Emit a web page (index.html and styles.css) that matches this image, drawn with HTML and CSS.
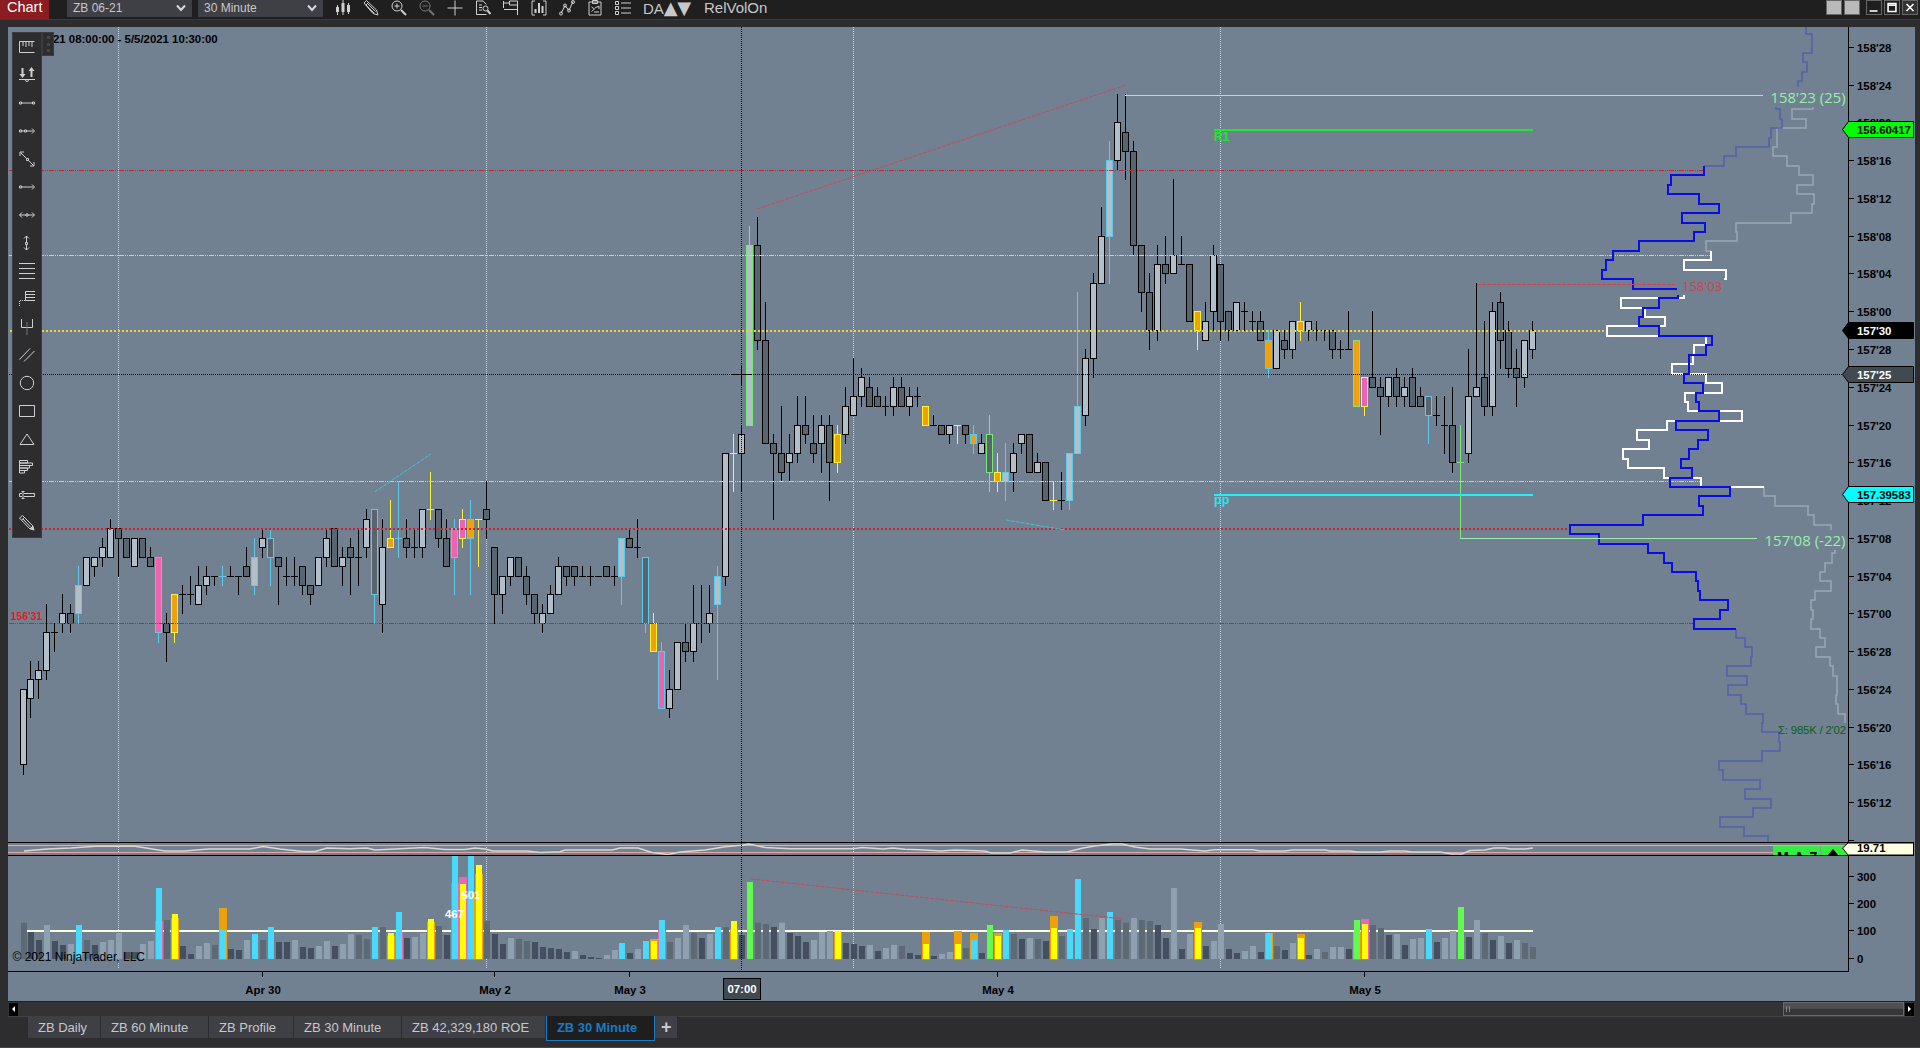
FILE: index.html
```html
<!DOCTYPE html>
<html lang="en">
<head>
  <meta charset="UTF-8">
  <meta name="viewport" content="width=device-width, initial-scale=1.0">
  <title>Chart - ZB 06-21</title>
  <link rel="stylesheet" href="styles.css">
</head>
<body>
  <header class="toolbar">
    <div class="window-tag">Chart</div>
    <div class="select">ZB 06-21 <svg width="10" height="8"><path d="M1 1.5l4 4.5 4-4.5"/></svg></div>
    <div class="select">30 Minute <svg width="10" height="8"><path d="M1 1.5l4 4.5 4-4.5"/></svg></div>

    <div class="tools">
      <svg viewBox="0 0 16 16"><path d="M2.500 5v10M8 0v15M13.500 3v11"/><path class="solid" d="M1 7h3v5H1zM6.500 3h3v9h-3zM12 5h3v7h-3z"/></svg>
      <svg viewBox="0 0 16 16"><path d="M1 3l2.500-2.500 10 9.500 1.500 5-5-1.500z"/><path d="M3 5l2.500-2.500M4.500 3.500l8 8M3 5l8 8" /></svg>
      <svg viewBox="0 0 16 16"><circle cx="6" cy="6" r="5"/><path d="M3.500 6h5M6 3.500v5"/><path class="thick" d="M10 10l5 5"/></svg>
      <svg class="dim" viewBox="0 0 16 16"><circle cx="6" cy="6" r="5"/><path d="M3.500 6h5"/><path class="thick" d="M10 10l5 5"/></svg>
      <svg viewBox="0 0 16 16"><path d="M8 .5v15M.5 8h15"/></svg>
      <svg viewBox="0 0 16 16"><path d="M11.500 4.500L8 1H1.500v13.500h10M4 5h3M4 7.500h3M4 10h3"/><circle cx="10.500" cy="8.500" r="2.500"/><path class="thick" d="M12.500 10.500l3 3.500"/></svg>
      <svg viewBox="0 0 16 16"><path d="M14.500 15V1H6.500v4h8M6 3H1M.5 1v7M1 9.500h13"/></svg>
      <svg viewBox="0 0 16 16"><path d="M4 1H1v14h3M12 1h3v14h-3"/><path class="solid" d="M3.500 9h2v4h-2zM7 3h2v10H7zM10.500 6h2v7h-2z"/></svg>
      <svg viewBox="0 0 16 16"><path d="M2 13.500l4-8 4 5 4-9"/><circle cx="2" cy="13.500" r="1.500"/><circle cx="6" cy="5.500" r="1.500"/><circle cx="10" cy="10.500" r="1.500"/><circle cx="14" cy="2" r="1.500"/></svg>
      <svg viewBox="0 0 16 16"><path d="M2 2h12v13H2zM5.500.5h5v3h-5zM4.500 7l3 2-3 2.500M8 8l4-2v3M7 12h5"/></svg>
      <svg viewBox="0 0 16 16"><path d="M.5 1.500h3v3h-3zM.5 6.500h3v3h-3zM.5 11.500h3v3h-3zM6 3h10M6 8h10M6 13h10"/></svg>
    </div>

    <span class="tool-text da">DA<span class="tri">▲▼</span></span>
    <span class="tool-text">RelVolOn</span>

    <div class="window-buttons">
      <i class="light"></i>
      <i class="light"></i>
      <svg viewBox="0 0 16 14"><path d="M3 11h9" /></svg>
      <svg viewBox="0 0 16 14"><path d="M3.500 2.500h9v9h-9zM3.500 4.500h9"/></svg>
      <svg class="close" viewBox="0 0 16 14"><path d="M4 3l8 8M12 3l-8 8"/></svg>
    </div>
  </header>

  <main class="chart-panel">
    <svg id="chart" width="1907" height="974" viewBox="8 27 1907 974"></svg>

    <div class="draw-tools">
      <svg viewBox="0 0 16 16"><path d="M.5 2.500h15M.5 2.500v11h15M4 3v4M7 3v5M10 3v4M13 3v5"/></svg>
      <svg viewBox="0 0 16 16"><path class="solid" d="M2.500 1h2v6h2l-3 4-3-4h2zM11.500 10h2V4h2l-3-4-3 4h2z"/><path d="M0 12.500h16M6.500 13a1.500 1.500 0 0 0 3 0"/></svg>
      <svg viewBox="0 0 16 16"><path d="M.5 7h2v2h-2zM13.500 7h2v2h-2zM2.500 8h11"/></svg>
      <svg viewBox="0 0 16 16"><path d="M.5 7h2v2h-2zM5.500 7h2v2h-2zM2.500 8h3M7.500 8h7M13 5.500L15.500 8 13 10.500"/></svg>
      <svg viewBox="0 0 16 16"><path d="M1.500 1.500l6 6M9.500 9.500l5 5M1 5V1h4M15 11v4h-4M7.500 7.500h2v2h-2z"/></svg>
      <svg viewBox="0 0 16 16"><path d="M.5 7h2v2h-2zM2.500 8h12M13 5.500L15.500 8 13 10.500"/></svg>
      <svg viewBox="0 0 16 16"><path d="M.5 8H7M9 8h6M3 5.500L.5 8 3 10.500M13 5.500L15.500 8 13 10.500M7 7h2v2H7z"/></svg>
      <svg viewBox="0 0 16 16"><path d="M7.500 1v6M7.500 9.500V15M5 3.500L7.500 1 10 3.500M5 12.500L7.500 15l2.500-2.500M6.500 7.500h2v2h-2z"/></svg>
      <svg viewBox="0 0 16 16"><path d="M0 .5h16M0 5.500h16M0 10.500h16M0 15.500h16"/></svg>
      <svg viewBox="0 0 16 16"><path d="M16 .5H6.500v9H16M6.500 3.500H16M6.500 6.500H16"/><path class="dots" d="M6 9.500H.5V16"/></svg>
      <svg viewBox="0 0 16 16"><path d="M2.500 0v8.500h11V0"/><path class="grey" d="M8 3v13"/></svg>
      <svg viewBox="0 0 16 16"><path d="M.5 12.500L11 1.500M5 14.500L15.500 4"/></svg>
      <svg viewBox="0 0 16 16"><circle cx="8" cy="8" r="6.700"/></svg>
      <svg viewBox="0 0 16 16"><path d="M.5 2.500h15v11H.5z"/></svg>
      <svg viewBox="0 0 16 16"><path d="M8 3l7 10.500H1z"/></svg>
      <svg viewBox="0 0 16 16"><path d="M.5 1.500h8v2.500H.5zM.5 4h13v2.500H.5zM.5 6.500h10V9H.5zM.5 9h8v2.500h-8zM.5 11.500h5V14H.5z"/></svg>
      <svg viewBox="0 0 16 16"><path d="M5 6.500h10.500v3H5M3 6.500H.5v3H3M4 4.500v7M2.500 4.500h3M2.500 11.500h3"/></svg>
      <svg viewBox="0 0 16 16"><path class="solid" d="M15.500 15.500l-1-4.500-3.500 3.500z"/><path d="M.5 3l3-2.500L14 11l-3 3zM2.500 5l3-2.500M4 4l8 8.500"/></svg>
    </div>
    <div class="draw-handle"><i></i><i></i><i></i></div>
  </main>

  <div class="scrollbar">
    <span class="arrow left"></span>
    <div class="thumb"><i></i><i></i></div>
    <span class="arrow right"></span>
  </div>

  <nav class="tabs">
    <div class="tab t1">ZB Daily</div>
    <div class="tab t2">ZB 60 Minute</div>
    <div class="tab t3">ZB Profile</div>
    <div class="tab t4">ZB 30 Minute</div>
    <div class="tab t5">ZB 42,329,180 ROE</div>
    <div class="tab active">ZB 30 Minute</div>
    <div class="tab add">+</div>
  </nav>

  <script src="chart.js"></script>
</body>
</html>
```

FILE: styles.css
```css
:root {
  --frame: #2d2d30;
  --bar: #1f1f1f;
  --control: #3f3f46;
  --chart-bg: #728191;
  --icon: #d0d0d0;
  --accent: #1b7ac2;
}

* {
  box-sizing: border-box;
}

body {
  margin: 0;
  width: 1920px;
  height: 1048px;
  overflow: hidden;
  display: flex;
  flex-direction: column;
  background: var(--frame);
  font-family: "Liberation Sans", Arial, sans-serif;
  font-size: 12px;
  color: #c8c8c8;
}

/* Top toolbar */
.toolbar {
  display: flex;
  align-items: flex-start;
  height: 20px;
  background: var(--bar);
  border-bottom: 1px solid #3a3a3c;
}

.window-tag {
  width: 49px;
  height: 19px;
  padding-left: 7px;
  margin-right: 18px;
  background: #8a1c22;
  color: #fff;
  font-size: 14.5px;
  line-height: 15px;
}

.select {
  display: flex;
  justify-content: space-between;
  align-items: center;
  width: 125px;
  height: 17px;
  padding: 0 6px 2px;
  margin-right: 6px;
  background: var(--control);
}

.select svg {
  fill: none;
  stroke: #d8d8d8;
  stroke-width: 2;
}

.tools {
  display: flex;
  gap: 12px;
  margin-left: 6px;
}

.tools svg {
  width: 16px;
  height: 16px;
}

.tools svg,
.draw-tools svg,
.window-buttons svg {
  fill: none;
  stroke: var(--icon);
  stroke-width: 1;
}

svg .solid {
  fill: var(--icon);
  stroke: none;
}

svg .thick {
  stroke-width: 2;
}

svg .dots {
  stroke-dasharray: 1 1;
}

svg .grey,
.tools svg.dim {
  stroke: #777;
}

.tool-text {
  margin-left: 12px;
  font-size: 15px;
  line-height: 15px;
}

.da {
  width: 49px;
  white-space: nowrap;
}

.tri {
  font-family: "DejaVu Sans", sans-serif;
  font-size: 18px;
  line-height: 15px;
  letter-spacing: -0.5px;
}

.window-buttons {
  display: flex;
  gap: 2px;
  margin-left: auto;
  padding-right: 2px;
}

.window-buttons svg,
.window-buttons .light {
  width: 16px;
  height: 15px;
  border: 1px solid #666;
}

.window-buttons .light {
  background: #b9b9b9;
}

.window-buttons .light + svg {
  margin-left: 4px;
}

.window-buttons svg {
  stroke: #fff;
  stroke-width: 1.8;
}

.window-buttons .close {
  background: #333;
}

/* Chart */
.chart-panel {
  position: relative;
  width: 1907px;
  height: 974px;
  margin: 7px 0 0 8px;
  background: var(--chart-bg);
}

#chart {
  display: block;
  font: bold 11.4px "Liberation Sans", Arial, sans-serif;
}

.draw-tools {
  position: absolute;
  left: 4px;
  top: 5px;
  width: 30px;
  height: 506px;
  padding: 0 6px;
  display: flex;
  flex-direction: column;
  background: var(--frame);
  border: 1px solid #3c3c40;
}

.draw-tools svg {
  width: 16px;
  height: 28px;
}

.draw-handle {
  position: absolute;
  left: 34px;
  top: 5px;
  width: 12px;
  height: 24px;
  display: flex;
  flex-direction: column;
  align-items: center;
  justify-content: space-evenly;
  background: var(--frame);
  border: 1px solid #3c3c40;
}

.draw-handle i {
  width: 3px;
  height: 3px;
  background: #46464a;
}

/* Candles */
.candle path { stroke: #000; fill: none; }
.candle rect { stroke: #000; fill: #58646e; }
.candle.up rect { fill: #b3bfc8; }
.candle.line-c path, .candle.line-c rect { stroke: #5ccbe9; }
.candle.line-y path, .candle.line-y rect { stroke: #fbf435; }
.candle.line-g path, .candle.line-g rect { stroke: #76ea72; }
.candle.fill-o rect { fill: #efa30a; }
.candle.fill-p rect { fill: #f062ae; }

/* Volume */
.vol-l { fill: #8fa0b0; }
.vol-m { fill: #5d6a76; }
.vol-d { fill: #445060; }
.vol-c { fill: #49d9fb; }
.vol-y { fill: #ffff00; }
.vol-g { fill: #63fa50; }
.vol-o { fill: #eca009; }
.vol-p { fill: #ea67b4; }

/* Lines */
.session { stroke: #cfd5da; stroke-dasharray: 1 1; }
.cross { stroke: #000; stroke-dasharray: 1 1; }
.level { stroke-dasharray: 5 1 1 1 1 1; }
.level.red { stroke: #d0222c; }
.level.yellow { stroke: #ecd82a; }
.level.poc { stroke-width: 2; stroke-dasharray: 2 2; }
.divergence { stroke-dasharray: 4 1; fill: none; }
.profile { fill: none; stroke-width: 2; }
.profile.faint { stroke-width: 1.500; }
.swing { font: 15px "Open Sans", sans-serif; }

/* Scrollbar */
.scrollbar {
  display: flex;
  align-items: center;
  width: 1907px;
  height: 16px;
  margin-left: 8px;
  background: #333334;
  border-top: 1px solid #202022;
  border-bottom: 1px solid #434346;
}

.thumb {
  display: flex;
  gap: 2px;
  width: 121px;
  height: 14px;
  margin-left: auto;
  margin-right: 1px;
  padding: 3px 2px;
  border: 1px solid #68686a;
  background: linear-gradient(#505052 45%, #363638 50%);
}

.thumb i {
  width: 1px;
  background: #858585;
}

.arrow {
  display: flex;
  align-items: center;
  justify-content: center;
  width: 9px;
  height: 13px;
  background: #000;
}

.arrow::before {
  content: "";
  border: 3px solid transparent;
}

.arrow.left { margin-left: 1px; }
.arrow.left::before { border-right-color: #fff; margin-left: -3px; }
.arrow.right { margin-right: 1px; }
.arrow.right::before { border-left-color: #fff; margin-right: -3px; }

/* Workspace tabs */
.tabs {
  display: flex;
  flex: 1;
  align-items: flex-start;
  padding-left: 28px;
  margin-top: -1px;
  font-size: 13px;
  border-bottom: 1px solid #464649;
}

.tab {
  height: 22px;
  padding-left: 10px;
  line-height: 23px;
  white-space: nowrap;
  background: var(--control);
  border-right: 1px solid #2d2d30;
}

.t1 { width: 73px; }
.t2 { width: 108px; }
.t3 { width: 85px; }
.t4 { width: 108px; }
.t5 { width: 144px; }

.tab.active {
  width: 109px;
  height: 25px;
  padding-left: 10px;
  color: var(--accent);
  background: #1e1e1e;
  border: 1px solid var(--accent);
  border-top: 0;
  font-weight: bold;
  font-size: 12.900px;
}

.tab.add {
  width: 23px;
  padding-left: 6px;
  font-size: 18px;
  font-weight: bold;
}
```

FILE: chart.js
```js
const chart = document.getElementById('chart');
const NS = 'http://www.w3.org/2000/svg';
const BG = '#728191';

// prices are in 32nds above 156'00
const TOP_TICK = 92;
const yOf = t => 47.3 + (TOP_TICK - t) * 9.4425;
const rowOf = t => Math.floor(yOf(t)) + 0.5;

// bar centre, sessions close up by a pixel
function xOf(i) {
  if (i === 0) return 23.5;
  return 22.5 + i * 8 - (i >= 75 ? 1 : 0) - (i >= 150 ? 1 : 0);
}

function add(tag, attrs, parent = chart) {
  const el = document.createElementNS(NS, tag);
  for (const key in attrs) {
    if (key === 'text') el.textContent = attrs[key];
    else el.setAttribute(key, attrs[key]);
  }
  parent.appendChild(el);
  return el;
}

function line(x1, y1, x2, y2, attrs = {}) {
  return add('line', { x1, y1, x2, y2, 'shape-rendering': 'crispEdges', ...attrs });
}

function text(x, y, value, attrs = {}) {
  return add('text', { x, y, text: value, ...attrs });
}

// open,high,low,close[,line colour + fill colour]
const candles = `
16,24,15,24 23,27,21,25 25,27,23,26 26,33,25,30 30,31,28,30 31,34,30,32 32,33,30,31 32,37,31,35,c
35,38,35,38 37,38,36,38 38,40,37,39 38,42,38,41 41,41,36,40 40,40,38,38 37,40,37,40 40,40,38,38
38,39,37,37 38,38,29,30,cp 31,32,27,30 34,34,29,30,yo 34,35,32,34 34,36,33,34 33,37,33,35 35,37,34,36
36,36,35,36 36,37,35,36,c 36,37,36,36 36,36,34,36 37,39,36,36 35,40,34,38,c 39,41,38,40 40,41,35,38,c
38,38,33,37 36,38,35,36 36,38,35,36 37,37,34,35 35,35,33,34 35,38,35,38 38,41,37,40 41,41,37,37
37,39,35,38 39,40,34,38 38,41,35,38 39,43,38,42 43,43,31,34,c 33,42,30,39 40,44,39,39,yo 40,46,38,40,c
40,42,38,39 39,41,38,39 39,43,38,43 43,47,42,43,y 43,43,39,40 40,42,37,37 41,42,34,38,cp 42,43,39,40,yp
42,44,34,40,co 42,42,37,42,y 43,46,40,42 39,39,31,34 34,36,32,36 36,38,35,38 38,38,36,36 36,37,33,34
34,34,31,32 31,33,30,32 32,35,32,34 34,38,34,37 37,37,35,36 37,37,35,36 36,37,36,36 36,37,35,36
36,36,36,36 37,37,36,36 36,37,35,36 36,40,33,40,c 40,41,39,39 39,42,38,39 38,38,30,31,c 31,32,28,28,yo
28,29,22,22,cp 22,26,21,24 24,29,24,29 29,31,27,28 28,35,27,31 31,35,29,31 31,35,30,32 33,37,25,36,c
36,49,35,49 49,51,45,49,y 49,52,45,51 52,73,52,71,g 71,74,60,61 61,65,50,50 50,51,42,49 49,54,46,47
48,51,46,49 49,55,48,52 52,55,50,51 50,53,48,49 50,53,47,52 52,53,44,48 51,52,47,48,yo 51,56,50,54
53,59,53,55 55,58,54,57 56,57,54,54 55,56,54,54 54,55,53,54 54,57,53,56 56,57,54,54 54,56,53,55
55,56,54,55 54,54,52,52,yo 52,53,52,52 52,52,51,51 51,52,50,52 52,52,50,52,y 52,52,50,51 51,52,49,50,co
49,51,49,50 51,53,45,47,g 47,49,45,46,yo 46,50,44,47,c 47,50,45,49 50,51,49,51 51,51,47,47 47,49,47,48
48,48,44,44 44,46,43,44,y 44,47,43,44 44,49,43,49,c 49,66,49,54,c 53,60,52,59 59,68,57,67 67,75,67,72
72,82,67,80,c 80,87,79,84 83,87,78,81 81,82,70,71 71,71,64,66 66,68,60,62 62,71,61,69 69,72,67,68
68,78,68,70 69,72,69,69 69,69,63,63 64,64,60,62,yo 61,65,61,63 64,71,62,70 69,69,61,63 64,64,61,62
62,65,62,65 64,65,62,64 63,64,62,63 63,64,61,61 61,62,57,58,co 58,62,58,62 61,62,59,60 60,63,59,63
63,65,61,62,yo 62,63,61,63 62,63,61,62 62,62,61,62 62,62,59,60 60,61,59,60 60,64,60,60 61,61,54,54,go
57,57,53,54,yp 57,64,56,56 56,57,51,55 55,57,54,57 57,58,54,55 55,57,54,56 57,58,54,54 55,56,54,54
55,55,50,53,c 53,55,52,53 52,55,49,52 52,56,47,48 48,52,40,48,g 49,60,48,55 55,67,55,56 57,63,53,54
54,65,53,64 65,66,58,61 62,63,57,58 58,60,54,57 57,61,56,61 60,63,59,62`.trim().split(/\s+/);

// bar height + colour, optional backing bar after the plus
const volumes = `
109m 81d 57d 102l 54d 42d 45l 102c 57m 42d 51l 57l 78l 21d 21d 45l 54l 213c+114p 117m 135y+123o
39d 15d 39l 48l 42m 87c+153o 30d 27d 57l 75c 57m 96c 51d 51d 57l 36d 33d 39l 54l 39d
45l 75l 72m 60m 96c 96m 78y+70o 141c+81p 63d 66l 78l 120y+111o 99m 72d 330c+227p 225y+246p 330c+200o 282y+255o 114m 75d
45d 63l 60m 54m 51d 36d 33d 30d 21d 24l 12d 6d 3d 12l 27l 48c 18d 30l 54c 54y+60o
117c+87p 51m 63l 102l 78m 63d 75l 96c 96m 114y+90o 72d 231g 109m 105m 96d 109l 78d 69d 51d 57l
81l 84l 84y+80o 48d 45d 39d 42l 24d 33l 42l 39m 18d 12d 45y+81o 9d 15l 21l 45y+84o 33m 57c+78o
18d 102g 69y+78o 87c 75m 60d 63l 60m 54d 93y+129o 69m 90c 240c 123m 90d 123l 141c 117m 109m 123l
117m 114m 102d 63d 213l 30d 75l 93y+111o 39d 54l 105l 30d 18d 24l 39l 21d 78c+78o 39m 27d 48l
63y+75o 12d 30l 21m 36l 36l 30d 117g+81o 105y+120p 102m 93m 72d 75l 42d 60l 63l 90c 51d 63l 84l
156g 66d 117l 78m 57d 69l 48d 57l 48m 36m`.trim().split(/\s+/);

// volume profiles, one x per tick going down
const weekProfile = { from: 94, bright: [79, 31], x: [
  1806, 1812, 1812, 1803, 1807, 1802, 1798, 1790, 1776, 1780, 1782, 1771, 1769, 1736, 1724, 1704, 1671, 1668,
  1699, 1719, 1682, 1705, 1694, 1639, 1613, 1606, 1602, 1633, 1678, 1659, 1643, 1639, 1659, 1712, 1706, 1689,
  1689, 1684, 1703, 1696, 1699, 1719, 1676, 1708, 1698, 1689, 1681, 1692, 1670, 1730, 1699, 1703, 1643, 1570,
  1599, 1648, 1664, 1672, 1696, 1698, 1700, 1728, 1720, 1694, 1736, 1745, 1752, 1751, 1727, 1747, 1728, 1741,
  1746, 1763, 1762, 1779, 1780, 1762, 1719, 1723, 1760, 1745, 1771, 1753, 1720, 1744, 1768] };

const dayProfile = { from: 86, bright: [70, 46], x: [
  1813, 1792, 1806, 1777, 1777, 1773, 1787, 1799, 1813, 1797, 1814, 1812, 1791, 1736, 1737, 1706, 1711, 1684,
  1726, 1720, 1684, 1621, 1645, 1665, 1607, 1706, 1694, 1693, 1672, 1706, 1722, 1685, 1688, 1742, 1667, 1637,
  1649, 1623, 1628, 1664, 1701, 1764, 1775, 1808, 1814, 1831, 1832, 1835, 1832, 1825, 1820, 1831, 1815, 1811,
  1813, 1811, 1820, 1825, 1816, 1830, 1833, 1837, 1837, 1836, 1838, 1845] };

function profilePath(profile, first, last) {
  const at = t => profile.x[profile.from - t];
  const edge = t => Math.round(yOf(t) + 0.6);
  let d = `M${at(first)} ${edge(first + 0.5)}`;
  for (let t = first; t >= last; t--) {
    d += `V${edge(t - 0.5)}`;
    if (at(t - 1)) d += `H${at(t - 1)}`;
  }
  return d;
}

function drawProfile(profile, color, faint) {
  const [hi, lo] = profile.bright;
  const end = profile.from - profile.x.length + 1;
  add('path', { d: profilePath(profile, profile.from, hi + 1), class: 'profile faint', stroke: faint });
  add('path', { d: profilePath(profile, lo - 1, end), class: 'profile faint', stroke: faint });
  add('path', { d: profilePath(profile, hi, lo), class: 'profile', stroke: color });
}

function drawCandles() {
  candles.forEach((row, i) => {
    const parts = row.split(',');
    const [o, h, l, c] = parts.slice(0, 4).map(rowOf);
    const style = parts[4] || '';
    let cls = 'candle' + (c < o ? ' up' : '');
    if (style[0]) cls += ' line-' + style[0];
    if (style[1]) cls += ' fill-' + style[1];
    const x = xOf(i);
    const g = add('g', { class: cls, 'shape-rendering': 'crispEdges' });
    const top = Math.min(o, c);
    const bottom = Math.max(o, c);
    add('path', { d: `M${x} ${h - 0.5}V${top}M${x} ${bottom}V${l + 0.5}` }, g);
    if (top === bottom) add('path', { d: `M${x - 3.5} ${top}H${x + 3.5}` }, g);
    else add('rect', { x: x - 3, y: top, width: 6, height: bottom - top }, g);
  });
}

function drawVolume() {
  line(24, 931, 1533, 931, { stroke: '#fffce0', 'stroke-width': 2 });
  const clip = add('clipPath', { id: 'vol-clip' });
  add('rect', { x: 8, y: 856, width: 1840, height: 116 }, clip);
  const g = add('g', { 'clip-path': 'url(#vol-clip)' });
  volumes.forEach((entry, i) => {
    const [front, back] = entry.split('+');
    const x = xOf(i) + 0.5;
    if (back) {
      const h = parseInt(back) / 3;
      add('rect', { x: x - 4, y: 959 - h, width: 8, height: h + 0.5, class: 'vol-' + back.slice(-1) }, g);
    }
    const h = parseInt(front) / 3;
    add('rect', { x: x - 3, y: 959 - h, width: 6, height: h, class: 'vol-' + front.slice(-1) }, g);
  });
  text(445, 917.5, '467', { fill: '#fff' });
  text(461.5, 898.5, '501', { fill: '#fff' });
}

function drawOscillator() {
  add('rect', { x: 8, y: 843, width: 1840, height: 2, fill: '#7f7a82' });
  add('rect', { x: 8, y: 853, width: 1840, height: 2, fill: '#7f7a82' });
  line(8, 845.5, 1848, 845.5, { stroke: '#e5a9ab' });
  line(8, 852.5, 1848, 852.5, { stroke: '#e5a9ab' });
  line(367, 843.5, 430, 843.5, { stroke: '#5795a8', 'stroke-dasharray': '4 1' });
  const points = '24,851 47,849 71,848 96,846.3 135,846.3 165,851 185,851 208,849 250,849 263,846.5 280,849 303,851.5 ' +
    '315,851.5 327,848 350,848.7 367,848 375,850 400,848.7 425,847.5 445,849.5 465,849.5 475,848 485,849 493,851 ' +
    '527,851 540,852.5 560,851.7 565,850 612,850 620,848 638,848 652,852.5 668,854.5 680,852 705,850 725,846.7 ' +
    '742,845.3 749,844 765,847.5 790,848.7 853,848.7 862,847.5 883,849 893,848 905,849.3 920,849.7 941,851 955,850 ' +
    '985,851 991,853 1010,853 1022,850 1045,852 1067,852 1083,848 1095,846 1112,844 1122,844 1135,847 1150,849 ' +
    '1180,849 1205,851 1215,849.7 1253,849.7 1260,851 1285,851 1292,850 1325,850 1330,851 1350,851 1357,852 ' +
    '1380,852 1390,851 1405,851 1412,852 1440,852 1452,854 1462,854 1470,850.5 1485,850 1494,848 1505,848 ' +
    '1510,849 1525,849 1533,848';
  add('polyline', { points, fill: 'none', stroke: '#d4d8cf', 'stroke-width': 1.5 });

  add('rect', { x: 1773, y: 846, width: 75, height: 9, fill: '#33ee40' });
  line(1820.5, 846, 1820.5, 855, { stroke: '#6fae76' });
  const clip = add('clipPath', { id: 'osc-clip' });
  add('rect', { x: 1773, y: 846, width: 75, height: 9 }, clip);
  text(1777, 862, 'M A 7', { 'clip-path': 'url(#osc-clip)', style: 'font-size:14px;letter-spacing:1px' });
  add('path', { d: 'M1828 855l5-6 5 6z' });

  line(8, 842.5, 1914, 842.5, { stroke: '#000' });
  line(8, 855.5, 1914, 855.5, { stroke: '#000' });
}

function drawLevels() {
  line(9, 170.5, 1704, 170.5, { class: 'level red' });
  line(9, 255.5, 1711, 255.5, { class: 'level yellow' });
  line(10, 331, 1607, 331, { class: 'level yellow poc' });
  line(9, 481.5, 1701, 481.5, { class: 'level yellow' });
  line(9, 529, 1570, 529, { class: 'level red poc' });
  line(9, 623.5, 1694, 623.5, { class: 'level red' });
  text(10.5, 620, "156'31", { fill: '#e01c26', style: 'font-size:10.5px' });

  line(1214, 130, 1533, 130, { stroke: '#1ee828', 'stroke-width': 2 });
  text(1214, 141, 'R1', { fill: '#1ee828', style: 'font-size:12px' });
  line(1214, 495, 1533, 495, { stroke: '#1ff2f7', 'stroke-width': 2 });
  text(1214, 503.5, 'pp', { fill: '#2be4ec', style: 'font-size:12.5px' });

  line(375, 491.7, 431, 454, { class: 'divergence', stroke: '#35c9cf', 'shape-rendering': 'auto' });
  line(1006, 520, 1065, 530, { class: 'divergence', stroke: '#35c9cf', 'shape-rendering': 'auto' });
  line(757, 209, 1126, 85, { class: 'divergence', stroke: '#c24c58', 'shape-rendering': 'auto' });
  line(751, 879, 1123, 919, { class: 'divergence', stroke: '#c24c58', 'shape-rendering': 'auto' });
}

// swing labels sit on a patch of the background
function swingLabel(x, y, width, value, fill, size) {
  add('rect', { x: x - 5, y: y - 16, width: width + 7, height: 20, fill: BG });
  text(x, y, value, { class: 'swing', fill, textLength: width, lengthAdjust: 'spacingAndGlyphs', style: `font-size:${size}px` });
}

function drawSwings() {
  line(1125, 95.5, 1763, 95.5, { stroke: '#9df0ae' });
  line(1460, 538.5, 1757, 538.5, { stroke: '#9df0ae' });
  line(1477, 284.5, 1675, 284.5, { stroke: '#c04a54', 'stroke-dasharray': '4 1' });
  swingLabel(1770.5, 103, 75, "158'23 (25)", '#93f2a6', 15);
  swingLabel(1764.5, 546, 81, "157'08 (-22)", '#93f2a6', 15);
  swingLabel(1682, 291, 40, "158'03", '#c84550', 13.5);
  text(1778, 734, "Σ: 985K / 2'02", { fill: '#0b5f1d', style: 'font-weight:normal', textLength: 68 });
}

function priceLabel(t) {
  return (156 + Math.floor(t / 32)) + "'" + String(t % 32).padStart(2, '0');
}

function flag(y, value, fill, color, stroke = '#000') {
  add('path', { d: `M1842.5 ${y}L1848.5 ${y - 8}H1913.5V${y + 8}H1848.5Z`, fill, stroke });
  text(1857, y + 4, value, { fill: color });
}

function drawAxes() {
  line(1848.5, 27, 1848.5, 971, { stroke: '#000' });
  line(8, 971.5, 1849, 971.5, { stroke: '#000' });
  for (let t = 92; t >= 12; t -= 4) {
    const y = rowOf(t);
    line(1849, y, 1854, y, { stroke: '#000' });
    text(1857, y + 4, priceLabel(t));
  }
  line(1849, 840.5, 1854, 840.5, { stroke: '#000' });
  [[300, 876.5], [200, 903.5], [100, 930.5], [0, 958.5]].forEach(([v, y]) => {
    line(1849, y, 1854, y, { stroke: '#000' });
    text(1857, y + 4, v);
  });
  [['Apr 30', 262.5], ['May 2', 494.5], ['May 3', 629.5], ['May 4', 997.5], ['May 5', 1364.5]].forEach(([label, x]) => {
    line(x, 972, x, 977, { stroke: '#000' });
    text(x + 0.5, 993.5, label, { 'text-anchor': 'middle' });
  });

  flag(129.5, '158.60417', '#00ff00', '#000');
  flag(330.5, "157'30", '#000', '#fff');
  flag(374.5, "157'25", '#414a50', '#fff');
  flag(494.5, '157.39583', '#00ffff', '#000');
  add('path', { d: 'M1842.500 848L1848 843H1913.500V855H1848Z', fill: '#ffffe2', stroke: '#000' });
  text(1857, 852, '19.71');

  add('rect', { x: 723.5, y: 978.5, width: 37, height: 21, fill: '#414a50', stroke: '#000' });
  text(742, 993, '07:00', { fill: '#fff', 'text-anchor': 'middle' });
}

function drawCrosshair() {
  line(741.5, 27, 741.5, 970, { class: 'cross' });
  line(9, 374.5, 1842, 374.5, { class: 'cross' });
  line(732, 374.5, 752, 374.5, { stroke: '#000' });
  line(741.5, 365, 741.5, 385, { stroke: '#000' });
}

[118.5, 486.5, 853.5, 1220.5].forEach(x => line(x, 27, x, 968, { class: 'session' }));
drawCandles();
drawVolume();
drawLevels();
drawProfile(dayProfile, '#ffffff', '#9aa6b2');
drawProfile(weekProfile, '#0a0ce6', '#5160ac');
drawSwings();
drawOscillator();
drawCrosshair();
drawAxes();
text(53, 42.5, '21 08:00:00 - 5/5/2021 10:30:00');
text(12.5, 961, '© 2021 NinjaTrader, LLC', { textLength: 132.500, style: 'font-weight:normal;font-size:12px' });
```
